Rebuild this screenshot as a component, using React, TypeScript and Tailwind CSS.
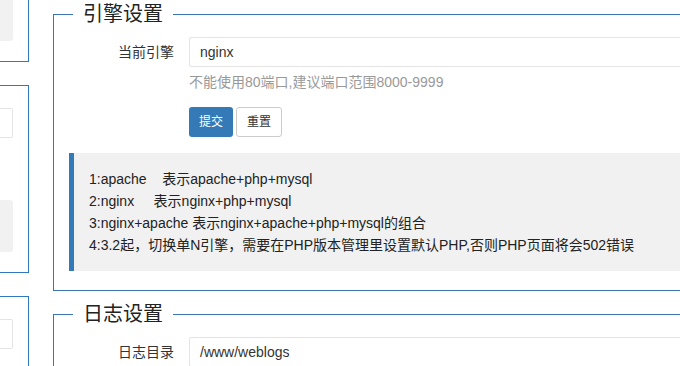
import React from "react";

const font = "font-['Liberation_Sans','Noto_Sans_CJK_SC',sans-serif]";

const notes = [
  "1:apache\u00a0\u00a0\u00a0\u00a0表示apache+php+mysql",
  "2:nginx\u00a0\u00a0\u00a0\u00a0\u00a0表示nginx+php+mysql",
  "3:nginx+apache 表示nginx+apache+php+mysql的组合",
  "4:3.2起，切换单N引擎，需要在PHP版本管理里设置默认PHP,否则PHP页面将会502错误",
];

function FormRow({ label, value }: { label: string; value: string }) {
  return (
    <div className="flex items-center">
      <label className="w-[105px] shrink-0 text-right text-[14px] text-[#333]">{label}</label>
      <div className="ml-[15px] flex h-[30px] w-[560px] items-center rounded-[2px] border border-[#e4e4e4] px-[10px] text-[14px] text-[#333]">
        {value}
      </div>
    </div>
  );
}

function Legend({ children }: { children: React.ReactNode }) {
  return (
    <legend className="ml-[4px] px-[10px] text-[20px] leading-[28px] text-[#222]">{children}</legend>
  );
}

export default function App() {
  return (
    <div className={`${font} flex h-[366px] w-[680px] overflow-hidden bg-white`}>
      {/* left column, mostly scrolled out of view */}
      <div className="w-[29px] shrink-0">
        <div className="h-[62px] border-r border-b border-[#3079c2] pr-[15px]">
          <div className="h-[41px] rounded-br-[3px] bg-[#f1f1f1]" />
        </div>
        <div className="mt-[23px] h-[188px] border-y border-r border-[#3079c2] pt-[22px] pr-[15px]">
          <div className="h-[30px] rounded-r-[2px] border border-l-0 border-[#e4e4e4]" />
          <div className="mt-[62px] h-[52px] rounded-r-[3px] bg-[#f1f1f1]" />
        </div>
        <div className="mt-[23px] h-[80px] border-t border-r border-[#3079c2] pt-[22px] pr-[15px]">
          <div className="h-[30px] rounded-r-[2px] border border-l-0 border-[#e4e4e4]" />
        </div>
      </div>

      {/* main column */}
      <div className="ml-[24px] w-[720px] shrink-0">
        <fieldset className="border border-[#3b74b0] pr-[15px] pb-[19px] pl-[15px]">
          <Legend>引擎设置</Legend>
          <div className="mt-[9px]">
            <FormRow label="当前引擎" value="nginx" />
            <p className="mt-[5px] ml-[120px] text-[14px] leading-[20px] text-[#999]">
              不能使用80端口,建议端口范围8000-9999
            </p>
            <div className="mt-[15px] ml-[120px] flex gap-[3px]">
              <button className="h-[30px] rounded-[3px] bg-[#337ab7] px-[10px] text-[12px] text-white">
                提交
              </button>
              <button className="h-[30px] rounded-[3px] border border-[#ccc] bg-white px-[10px] text-[12px] text-[#333]">
                重置
              </button>
            </div>
          </div>
          <div className="mt-[16px] border-l-[5px] border-[#337ab7] bg-[#f1f1f1] py-[15px] pl-[15px]">
            {notes.map((n) => (
              <p key={n} className="text-[14px] leading-[22px] whitespace-pre text-[#222]">
                {n}
              </p>
            ))}
          </div>
        </fieldset>

        <fieldset className="mt-[9px] border border-[#3b74b0] px-[15px] pb-[19px]">
          <Legend>日志设置</Legend>
          <div className="mt-[9px]">
            <FormRow label="日志目录" value="/www/weblogs" />
          </div>
        </fieldset>
      </div>
    </div>
  );
}
